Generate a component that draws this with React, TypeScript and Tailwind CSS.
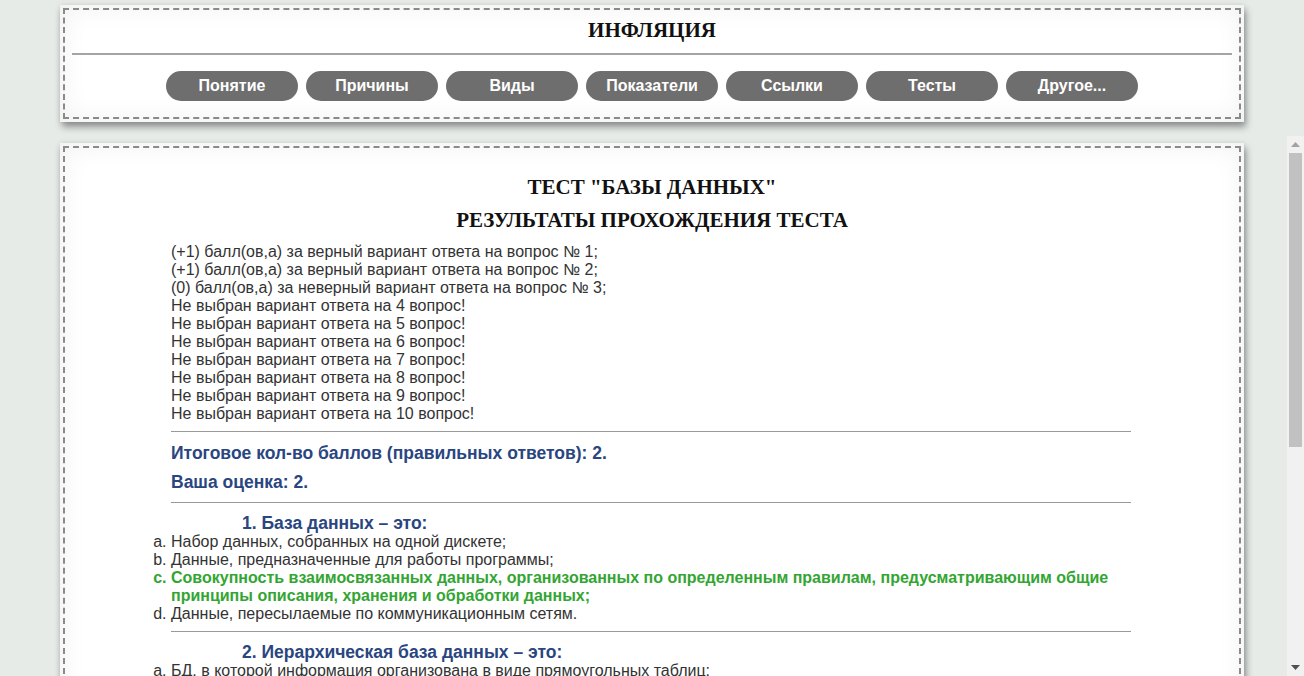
const navItems = ['Понятие', 'Причины', 'Виды', 'Показатели', 'Ссылки', 'Тесты', 'Другое...']

const resultLines = [
  '(+1) балл(ов,а) за верный вариант ответа на вопрос № 1;',
  '(+1) балл(ов,а) за верный вариант ответа на вопрос № 2;',
  '(0) балл(ов,а) за неверный вариант ответа на вопрос № 3;',
  'Не выбран вариант ответа на 4 вопрос!',
  'Не выбран вариант ответа на 5 вопрос!',
  'Не выбран вариант ответа на 6 вопрос!',
  'Не выбран вариант ответа на 7 вопрос!',
  'Не выбран вариант ответа на 8 вопрос!',
  'Не выбран вариант ответа на 9 вопрос!',
  'Не выбран вариант ответа на 10 вопрос!',
]

type Question = { title: string; options: string[]; correct: number }

const questions: Question[] = [
  {
    title: '1. База данных – это:',
    options: [
      'Набор данных, собранных на одной дискете;',
      'Данные, предназначенные для работы программы;',
      'Совокупность взаимосвязанных данных, организованных по определенным правилам, предусматривающим общие принципы описания, хранения и обработки данных;',
      'Данные, пересылаемые по коммуникационным сетям.',
    ],
    correct: 2,
  },
  {
    title: '2. Иерархическая база данных – это:',
    options: [
      'БД, в которой информация организована в виде прямоугольных таблиц;',
      'БД, в которой элементы в записи упорядочены, т.е. один элемент считается главным, остальные подчиненными;',
      'БД, в которой записи расположены в произвольном порядке;',
      'БД, в которой существует возможность устанавливать дополнительно к вертикальным иерархическим связям горизонтальные связи.',
    ],
    correct: 1,
  },
  {
    title: '3. Реляционная база данных – это:',
    options: [
      'БД, в которой информация организована в виде прямоугольных таблиц;',
      'БД, в которой элементы в записи упорядочены;',
      'БД, в которой записи расположены в произвольном порядке;',
      'БД, в которой принята свободная связь между элементами разных уровней.',
    ],
    correct: 0,
  },
]

const panel =
  'ml-[60px] w-[1184px] bg-white p-[3px] shadow-[inset_0_0_28px_rgba(0,0,0,0.07),2px_5px_7px_rgba(0,0,0,0.38),0_0_6px_rgba(0,0,0,0.08)]'

const serifTitle = "text-center font-['Liberation_Serif','Times_New_Roman',serif] text-[21px] leading-[24px] font-bold text-[#111]"

function Scrollbar() {
  return (
    <div className="flex w-[17px] shrink-0 flex-col bg-[#f1f1f1]">
      <div className="flex h-[17px] items-center justify-center">
        <svg width="9" height="5" viewBox="0 0 9 5">
          <path d="M0 5 L4.5 0 L9 5 Z" fill="#a3a3a3" />
        </svg>
      </div>
      <div className="mx-[2px] h-[294px] bg-[#c1c1c1]" />
      <div className="flex-1" />
      <div className="flex h-[17px] items-center justify-center">
        <svg width="9" height="5" viewBox="0 0 9 5">
          <path d="M0 0 L9 0 L4.5 5 Z" fill="#505050" />
        </svg>
      </div>
    </div>
  )
}

export default function App() {
  return (
    <div className="flex h-[676px] flex-col overflow-hidden bg-[#e6ebe8] font-['Liberation_Sans',Arial,sans-serif]">
      {/* Fixed header */}
      <header className="shrink-0 pt-[5px] pb-[14px]">
        <div className={panel + ' h-[117px]'}>
          <div className="flex h-full flex-col border-2 border-dashed border-[#8a8a8a]">
            <h1 className={serifTitle + ' pt-[8px]'}>ИНФЛЯЦИЯ</h1>
            <div className="mx-[7px] mt-[11px] h-[2px] bg-[#a4a4a4]" />
            <nav className="mt-[16px] flex justify-center gap-[8px]">
              {navItems.map((item) => (
                <a
                  key={item}
                  href="#"
                  className="flex h-[30px] w-[132px] items-center justify-center rounded-[15px] bg-[#6e6e6e] text-[16px] font-bold text-white"
                >
                  {item}
                </a>
              ))}
            </nav>
          </div>
        </div>
      </header>

      {/* Content area with its scrollbar */}
      <div className="flex min-h-0 flex-1">
        <main className="min-w-0 flex-1 overflow-hidden">
          <div className={panel + ' mt-[7px] mb-[16px]'}>
            <div className="border-2 border-dashed border-[#8a8a8a] pt-[27px] pb-[30px]">
              <h2 className={serifTitle}>ТЕСТ "БАЗЫ ДАННЫХ"</h2>
              <h2 className={serifTitle + ' mt-[9px]'}>РЕЗУЛЬТАТЫ ПРОХОЖДЕНИЯ ТЕСТА</h2>

              <div className="mx-auto mt-[11px] w-[962px]">
                <div className="text-[16px] leading-[18px] text-[#333]">
                  {resultLines.map((line) => (
                    <div key={line}>{line}</div>
                  ))}
                </div>

                <hr className="mt-[8px] mr-[2px] border-t border-[#999]" />
                <p className="mt-[11px] text-[17.5px] leading-[20px] font-bold text-[#2a4680]">
                  Итоговое кол-во баллов (правильных ответов): 2.
                </p>
                <p className="mt-[9px] text-[17.5px] leading-[20px] font-bold text-[#2a4680]">Ваша оценка: 2.</p>
                <hr className="mt-[10px] mr-[2px] border-t border-[#999]" />

                {questions.map((q, qi) => (
                  <div key={q.title}>
                    {qi > 0 && <hr className="mt-[8px] mr-[2px] border-t border-[#999]" />}
                    <h3 className="mt-[10px] pl-[71px] text-[17.5px] leading-[20px] font-bold text-[#2a4680]">{q.title}</h3>
                    <ol className="list-[lower-alpha] text-[16px] leading-[18px] text-[#333]">
                      {q.options.map((opt, oi) => (
                        <li key={opt} className={oi === q.correct ? 'font-bold text-[#33a532]' : ''}>
                          {opt}
                        </li>
                      ))}
                    </ol>
                  </div>
                ))}
              </div>
            </div>
          </div>
        </main>
        <Scrollbar />
      </div>
    </div>
  )
}
